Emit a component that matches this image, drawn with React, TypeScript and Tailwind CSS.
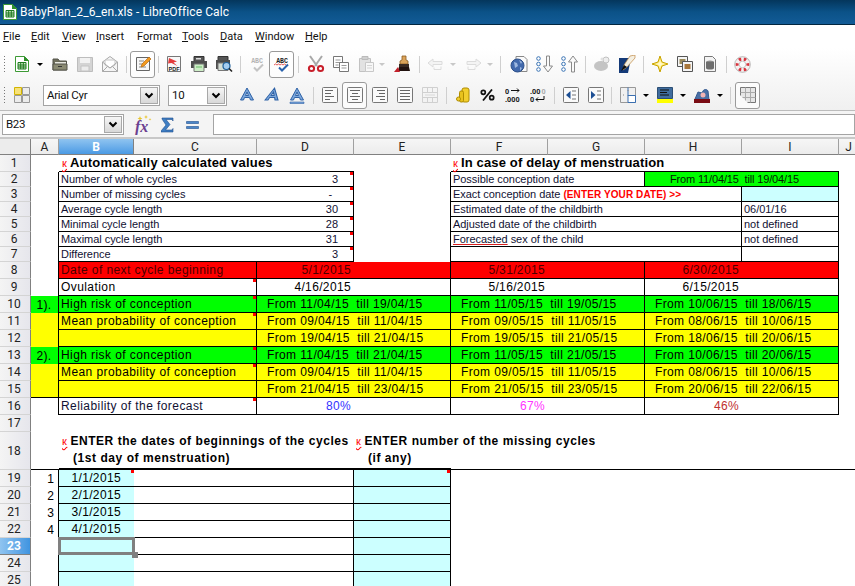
import type { ReactNode } from "react";

const ui = "font-['Roboto',sans-serif]";
const arial = "font-['Liberation_Sans',Arial,sans-serif]";

function Ico({ children, w = 18, h = 18 }: { children: ReactNode; w?: number; h?: number }) {
  return (
    <svg width={w} height={h} viewBox={`0 0 ${w} ${h}`} className="block shrink-0">
      {children}
    </svg>
  );
}

const GreenDoc = () => (
  <Ico w={16} h={18}>
    <path d="M1.500 1.500h9l4 4v11h-13z" fill="#fff" stroke="#3d9a35" />
    <path d="M10 1l5 5h-5z" fill="#2f8f2a" />
    <path d="M4 7.500h8v6.500h-8z" fill="#cfe9c5" stroke="#1f7a20" />
    <path d="M4 10h8M4 12h8M6.700 7.500v6.500M9.300 7.500v6.500" stroke="#1f7a20" />
  </Ico>
);
const Open = () => (
  <Ico>
    <path d="M2 4h5l1.500 2h7v9h-13.500z" fill="#6f6f5c" stroke="#55554a" />
    <path d="M4 7h11v2h-11z" fill="#e8e8e0" />
    <path d="M2 9h14v6h-14z" fill="#8a8a72" stroke="#55554a" />
    <path d="M7 11h4v1h-4z" fill="#333" />
  </Ico>
);
const Save = () => (
  <Ico>
    <path d="M1.500 2.500h15v14h-15z" fill="#d4d4d4" stroke="#bdbdbd" />
    <path d="M4 3h10v5h-10z" fill="#f2f2f2" />
    <path d="M5 11h8v5h-8z" fill="#ececec" stroke="#c4c4c4" />
  </Ico>
);
const Mail = () => (
  <Ico>
    <path d="M1.500 7l7.500-5.500 7.500 5.500v9.500h-15z" fill="#f5f5f5" stroke="#a9a9a9" />
    <path d="M4 5h10v5l-5 3-5-3z" fill="#fff" stroke="#c4c4c4" />
    <path d="M1.500 7l7.500 6 7.500-6M1.500 16.500l5-5M16.500 16.500l-5-5" fill="none" stroke="#a9a9a9" />
  </Ico>
);
const EditDoc = () => (
  <Ico>
    <path d="M2.500 2.500h13v13h-13z" fill="#f6f6f6" stroke="#666" />
    <path d="M5 6h5M5 9h4M5 12h7" stroke="#888" />
    <path d="M7 12l1-3 7-7 2 2-7 7z" fill="#f29a1f" stroke="#b86a10" strokeWidth="0.7" />
  </Ico>
);
const Pdf = () => (
  <Ico w={16} h={18}>
    <path d="M1.500 1.500h13v15h-13z" fill="#f8f8f8" stroke="#777" />
    <path d="M3 3l8 3.500-3.500 1 4 3.500-6-3-3.500 .5z" fill="#e33b3b" />
    <text x="8" y="16" textAnchor="middle" fontSize="5.500" fontWeight="700" fontFamily="Liberation Sans" fill="#222">PDF</text>
  </Ico>
);
const Printer = () => (
  <Ico>
    <path d="M4 1.500h10v5h-10z" fill="#555" stroke="#333" />
    <path d="M6 3h5v1.500h-5z" fill="#ddd" />
    <path d="M1 6h16v7h-16z" fill="#4d4d4d" />
    <path d="M4 9h10v7.500h-10z" fill="#cdeec6" stroke="#777" />
    <path d="M6 12h6" stroke="#6b6" />
  </Ico>
);
const Preview = () => (
  <Ico>
    <path d="M3 1.500h10v5h-10z" fill="#555" stroke="#333" />
    <path d="M1 5h14v9h-14z" fill="#4d4d4d" />
    <path d="M3 8h10v7.500h-10z" fill="#d6ded6" stroke="#777" />
    <circle cx="11.500" cy="11" r="3.500" fill="#a5cdf0" stroke="#1d5f9a" strokeWidth="1.200" />
    <path d="M14 13.500l3 3" stroke="#222" strokeWidth="1.600" />
  </Ico>
);
const Abc = ({ on }: { on: boolean }) => (
  <Ico>
    <text x="9" y="7.500" textAnchor="middle" fontSize="6.500" fontWeight="700" fontFamily="Liberation Mono" fill={on ? "#222" : "#b4b4b4"}>ABC</text>
    {on && <path d="M1 10l1.500-1 1.500 1 1.500-1 1.500 1 1.500-1 1.500 1 1.500-1 1.500 1" fill="none" stroke="#d83030" strokeWidth="0.800" />}
    <path d="M6 12.500l3 3 6-6" fill="none" stroke={on ? "#2a63ad" : "#c4c4c4"} strokeWidth="2" />
  </Ico>
);
const Scissors = () => (
  <Ico>
    <path d="M3 1l7 10M15 1l-7 10" stroke="#a8a8a8" strokeWidth="2" />
    <circle cx="4.500" cy="13.500" r="2.600" fill="none" stroke="#c81e2a" strokeWidth="2" />
    <circle cx="13.500" cy="13.500" r="2.600" fill="none" stroke="#c81e2a" strokeWidth="2" />
  </Ico>
);
const Copy = () => (
  <Ico>
    <path d="M1.500 1.500h9v11h-9z" fill="#fff" stroke="#777" />
    <path d="M3.500 5h5M3.500 7.500h5M3.500 10h3" stroke="#999" />
    <path d="M7.500 7.500h9v9h-9z" fill="#fff" stroke="#777" />
    <path d="M9.500 10.500h5M9.500 13h5" stroke="#999" />
  </Ico>
);
const Paste = () => (
  <Ico>
    <path d="M2.500 3.500h11v13h-11z" fill="#e2e2e2" stroke="#c2c2c2" />
    <path d="M5 1.500h6v3h-6z" fill="#d0d0d0" stroke="#bbb" />
    <path d="M8.500 7.500h8v9h-8z" fill="#f7f7f7" stroke="#c8c8c8" />
    <path d="M10 10.500h5M10 13h5" stroke="#d4d4d4" />
  </Ico>
);
const Brush = () => (
  <Ico>
    <path d="M8 1h4v4l2 1v3h-8v-3l2-1z" fill="#dba35a" stroke="#8a5a1f" strokeWidth="0.800" />
    <path d="M5 9h10v3h-10z" fill="#3a2a22" />
    <path d="M5 12h10l1 4h-12z" fill="#22120f" />
    <path d="M0 17l4-5 2 5z" fill="#c2202a" />
  </Ico>
);
const Undo = ({ flip }: { flip?: boolean }) => (
  <Ico>
    <g transform={flip ? "translate(18 0) scale(-1 1)" : undefined} fill="#f4f4f4" stroke="#dcdcdc">
      <path d="M1 8l5-4v2.500h9v3h-9v2.500z" />
      <path d="M14 11.500v3h-7v-2" fill="none" />
    </g>
  </Ico>
);
const Link = () => (
  <Ico>
    <path d="M6 1.500h8l3 3v12h-11z" fill="#fafafa" stroke="#888" />
    <circle cx="7.500" cy="10.500" r="6.500" fill="#4169ad" stroke="#2b4f8a" />
    <path d="M4 7l3 1 1 3-3 2zM9 5l3 2-1 2zM10 12l2 1-2 3z" fill="#9db8e0" />
  </Ico>
);
const Sort = ({ up }: { up?: boolean }) => (
  <Ico>
    <circle cx="3.500" cy="3.500" r="1.800" fill="#fff" stroke="#3a74b5" />
    <circle cx="3.500" cy="9" r="1.800" fill="#fff" stroke="#3a74b5" />
    <circle cx="3.500" cy="14.500" r="1.800" fill="#fff" stroke="#3a74b5" />
    <path
      d={up ? "M13 1l4.500 6h-3v10h-3v-10h-3z" : "M13 17l4.500-6h-3v-10h-3v10h-3z"}
      fill="#fafafa"
      stroke="#8a8a8a"
    />
  </Ico>
);
const Blob = () => (
  <Ico>
    <ellipse cx="8" cy="11" rx="7" ry="5" fill="#c4c4c4" />
    <circle cx="13" cy="5" r="3" fill="#ededed" stroke="#c0c0c0" />
    <circle cx="9" cy="4" r="1.500" fill="#e0e0e0" />
  </Ico>
);
const Pen = () => (
  <Ico>
    <path d="M1 3h12l-3 15h-9z" fill="#143a78" />
    <path d="M12 1l5-1v3l-8 9-4 3 1-5z" fill="#f4efe2" stroke="#c08a45" strokeWidth="0.700" />
    <path d="M3 16l3-6 3 2z" fill="#111" />
  </Ico>
);
const Star = () => (
  <Ico>
    <path d="M9 1l2 6 6 2-6 2-2 6-2-6-6-2 6-2z" fill="#ffea7a" stroke="#c9a400" />
    <path d="M9 5l1 3 3 1-3 1-1 3-1-3-3-1 3-1z" fill="#fff9d0" />
  </Ico>
);
const Frames = () => (
  <Ico>
    <path d="M1.500 1.500h10v10h-10z" fill="#f5f5f5" stroke="#555" />
    <path d="M3.500 4h6v5h-6z" fill="#9a8a5a" />
    <path d="M6.500 6.500h10v10h-10z" fill="#f5f5f5" stroke="#555" />
    <path d="M8.500 9h6v5h-6z" fill="#a8763a" />
  </Ico>
);
const DocCan = () => (
  <Ico w={14} h={18}>
    <path d="M1.500 1.500h8l3 3v12h-11z" fill="#f3f3f3" stroke="#777" />
    <ellipse cx="7" cy="7" rx="4" ry="1.600" fill="#8c8c8c" />
    <path d="M3 7h8v6c0 2-8 2-8 0z" fill="#6e6e6e" />
  </Ico>
);
const Help = () => (
  <Ico w={17} h={17}>
    <circle cx="8.500" cy="8.500" r="6.500" fill="none" stroke="#f4f0f0" strokeWidth="4" />
    <path d="M4 2.800a7.500 7.500 0 0 1 3-1l.5 3a4 4 0 0 0-1.500.7zM10 1.800a7.500 7.500 0 0 1 3 1l-2 2.700a4 4 0 0 0-1.500-.7zM15.200 7l-3 .5a4 4 0 0 1 0 2l3 .5a7.500 7.500 0 0 0 0-3zM13 14.200l-2-2.700a4 4 0 0 1-1.500.7l.5 3a7.500 7.500 0 0 0 3-1zM7 15.200l.5-3a4 4 0 0 1-1.500-.7l-2 2.700a7.500 7.500 0 0 0 3 1zM1.800 10l3-.5a4 4 0 0 1 0-2l-3-.5a7.500 7.500 0 0 0 0 3z" fill="#d8343e" />
    <circle cx="8.500" cy="8.500" r="7.800" fill="none" stroke="#999" strokeWidth="0.600" />
    <circle cx="8.500" cy="8.500" r="3.300" fill="none" stroke="#aaa" strokeWidth="0.600" />
  </Ico>
);
const Styles = () => (
  <Ico w={16} h={16}>
    <path d="M.5.500h7v7h-7z" fill="#f7e27a" stroke="#d2b400" />
    <path d="M8.500.500h7v7h-7zM.5 8.500h7v7h-7zM8.500 8.500h7v7h-7z" fill="#ececec" stroke="#999" />
  </Ico>
);
const BigA = ({ kind }: { kind: "b" | "i" | "u" }) => (
  <Ico>
    <g transform={kind === "i" ? "skewX(-14) translate(3 0)" : undefined}>
      <path
        d="M9 2l6.500 12h-3l-1-2.500h-5l-1 2.500h-3zM9 6l-1.500 3.500h3z"
        fill="#7aa6dc"
        stroke="#2f62a6"
        fillRule="evenodd"
      />
    </g>
    {kind === "u" && <path d="M2 16h14v1.500h-14z" fill="#7aa6dc" stroke="#2f62a6" strokeWidth="0.600" />}
  </Ico>
);
const Align = ({ lines }: { lines: [number, number][] }) => (
  <Ico w={16} h={16}>
    <rect x=".5" y=".5" width="15" height="15" rx="1" fill="#fafafa" stroke="#777" />
    {lines.map(([a, b], i) => (
      <path key={i} d={`M${a} ${3.5 + i * 3}H${b}`} stroke="#666" />
    ))}
  </Ico>
);
const Merge = () => (
  <Ico w={16} h={16}>
    <path d="M.5.500h15v15h-15zM.5 5.500h15M.5 10.500h15M5.500.500v5M10.500.500v5M5.500 10.500v5M10.500 10.500v5" fill="none" stroke="#d0d0d0" />
    <path d="M3 8h10" stroke="#d8d8d8" />
  </Ico>
);
const Coins = () => (
  <Ico w={14} h={16}>
    <rect x="6" y="1" width="7" height="14" rx="2" fill="#f2cf2e" stroke="#b08d00" />
    <rect x="3.500" y="4" width="4" height="11" rx="1.500" fill="#e8c21d" stroke="#b08d00" />
    <circle cx="2.500" cy="12" r="2" fill="#f2cf2e" stroke="#b08d00" />
  </Ico>
);
const Percent = () => (
  <Ico w={15} h={12}>
    <circle cx="3.300" cy="3.300" r="2" fill="none" stroke="#111" strokeWidth="1.700" />
    <circle cx="11.700" cy="8.700" r="2" fill="none" stroke="#111" strokeWidth="1.700" />
    <path d="M12 .5l-9 11" stroke="#111" strokeWidth="1.800" />
  </Ico>
);
const Decimals = ({ add }: { add?: boolean }) => (
  <Ico w={16} h={16}>
    <g fontFamily="Liberation Sans" fontWeight="700" fontSize="7.500" fill="#111">
      <text x="0" y="7">{add ? "0" : ".00"}</text>
      <text x="0" y="15">{add ? ".000" : "0"}</text>
    </g>
    {add ? (
      <path d="M6 3.500h8M12 1.500l2 2-2 2" fill="none" stroke="#111" />
    ) : (
      <path d="M14 9v3.500h-8M8 10.500l-2 2 2 2" fill="none" stroke="#111" />
    )}
    {!add && <text x="11.500" y="7" fontFamily="Liberation Sans" fontWeight="700" fontSize="7.500" fill="#aaa">0</text>}
  </Ico>
);
const Indent = ({ inc }: { inc?: boolean }) => (
  <Ico w={16} h={16}>
    <rect x=".5" y=".5" width="15" height="15" rx="1" fill="#fafafa" stroke="#777" />
    <path d={inc ? "M3 4v8l4.500-4z" : "M7.500 4v8l-4.500-4z"} fill="#1d4f94" />
    <path d="M9 4h4M9 8h4M9 12h4" stroke="#777" />
  </Ico>
);
const Borders = () => (
  <Ico w={16} h={16}>
    <path d="M.5.500h15v15h-15z" fill="#f0f0f0" stroke="#999" />
    <path d="M8 .5v8H15.500v7H8V8" fill="#fff" stroke="#3b6fb0" />
    <path d="M3 8h2M8 3v2" stroke="#888" strokeDasharray="1 1" />
  </Ico>
);
const BgColor = () => (
  <Ico w={16} h={16}>
    <path d="M.5.500h15v11h-15z" fill="#3f6c9e" stroke="#2c4f75" />
    <path d="M3 3h9M3 5.500h7M3 8h9" stroke="#111" />
    <path d="M0 12h16v4h-16z" fill="#ffff00" />
  </Ico>
);
const FontColor = () => (
  <Ico w={16} h={16}>
    <path d="M1 12l3-7 4 1 1-2c1-2 4-2 5 0l1 9z" fill="#4a6fa5" stroke="#345a90" />
    <circle cx="9" cy="8" r="2.500" fill="#f3b4b4" />
    <path d="M0 12h16v4h-16z" fill="#7a0c14" />
  </Ico>
);
const GridTool = () => (
  <Ico w={16} h={16}>
    <path d="M.5.500h15v15h-15z" fill="#e6e6e6" stroke="#777" />
    <path d="M5.500.500v15M10.500.500v15M.5 5.500h15M.5 10.500h15" stroke="#aaa" />
    <path d="M0 16V8l8 8z" fill="#fafafa" />
  </Ico>
);
const FxIcon = () => (
  <svg width="18" height="20" viewBox="0 0 18 20" className="block">
    <path d="M6 1l.7 1.800 1.800.7-1.800.7-.7 1.800-.7-1.800-1.800-.7 1.800-.7zM12 0l.6 1.400 1.400.6-1.400.6-.6 1.400-.6-1.400-1.400-.6 1.400-.6zM16 3l.4 1 1 .4-1 .4-.4 1-.4-1-1-.4 1-.4z" fill="#e8c52e" />
    <text x="1" y="17" fontFamily="Liberation Serif" fontStyle="italic" fontWeight="700" fontSize="16" fill="#6b3f8f">fx</text>
  </svg>
);

const Btn = ({ children, boxed }: { children: ReactNode; boxed?: boolean }) => (
  <div
    className={`w-[25px] h-[27px] shrink-0 flex items-center justify-center rounded-[3px] ${
      boxed ? "border border-[#9a9a9a] bg-white/70" : ""
    }`}
  >
    {children}
  </div>
);
const Arrow = ({ className, off }: { className: string; off?: boolean }) => (
  <div className={`${className} shrink-0 flex items-center justify-center`}>
    <div
      className={`w-0 h-0 border-x-[3px] border-x-transparent border-t-[3px] ${
        off ? "border-t-[#c8c8c8]" : "border-t-black"
      }`}
    />
  </div>
);
const Sep = ({ className }: { className: string }) => (
  <div className={`${className} shrink-0 flex justify-center`}>
    <div className="w-px h-[17px] bg-[#cfcfcf]" />
  </div>
);
const Grip = () => (
  <div className="w-[9px] shrink-0 flex flex-col items-center gap-[2px]">
    {[0, 1, 2, 3, 4, 5].map((i) => (
      <div key={i} className="w-px h-px bg-[#777]" />
    ))}
  </div>
);
const Chevron = () => (
  <svg width="10" height="7" viewBox="0 0 10 7" className="block">
    <path d="M1.500 1.500L5 5l3.500-3.500" fill="none" stroke="#000" strokeWidth="2" />
  </svg>
);
const Combo = ({ value, className }: { value: string; className: string }) => (
  <div className={`${className} h-[21px] shrink-0 flex items-stretch justify-between border border-[#a4a4a4] bg-white`}>
    <span className={`${ui} pl-[3px] text-[11.5px] leading-[19px] text-[#111] tracking-[-0.3px]`}>{value}</span>
    <div className="w-[18px] m-px flex items-center justify-center border border-[#a8a8a8] bg-gradient-to-b from-[#f6f6f6] to-[#d8d8d8]">
      <Chevron />
    </div>
  </div>
);

const menus = [
  { pre: "", u: "F", post: "ile", w: "w-[28px]" },
  { pre: "", u: "E", post: "dit", w: "w-[31px]" },
  { pre: "", u: "V", post: "iew", w: "w-[34px]" },
  { pre: "", u: "I", post: "nsert", w: "w-[41px]" },
  { pre: "F", u: "o", post: "rmat", w: "w-[45px]" },
  { pre: "", u: "T", post: "ools", w: "w-[38px]" },
  { pre: "", u: "D", post: "ata", w: "w-[35px]" },
  { pre: "", u: "W", post: "indow", w: "w-[50px]" },
  { pre: "", u: "H", post: "elp", w: "w-[40px]" },
];

// красные метки примечаний в углу ячейки
const Mark = () => <span className="absolute top-0 right-0 w-[3px] h-[3px] bg-[#ff0000]" />;
const K = () => <span className="text-[#ff0000] font-normal underline decoration-wavy decoration-[#ff0000] text-[11px]">к</span>;

const Head = ({ n, on }: { n: number; on?: boolean }) => (
  <div
    className={`${ui} flex items-center justify-center pr-[2px] border-r border-b text-[12px] leading-none ${
      on
        ? "border-[#808080] bg-gradient-to-r from-[#8fc4f0] to-[#3f94e0] text-white font-bold"
        : "border-r-[#808080] border-b-[#d4d4d4] bg-gradient-to-r from-[#f4f4f4] to-[#e6e6ec] text-[#222]"
    }`}
  >
    {n}
  </div>
);
const ColHead = ({ t, on }: { t: string; on?: boolean }) => (
  <div
    className={`${ui} flex items-center justify-center border-r border-b border-b-[#808080] text-[12px] leading-none ${
      on
        ? "border-r-[#808080] bg-gradient-to-b from-[#8fc4f0] to-[#4a9ae4] text-white font-bold"
        : "border-r-[#a0a0a0] bg-gradient-to-b from-[#f6f6f6] to-[#ececec] text-[#222]"
    }`}
  >
    {t}
  </div>
);
const Cell = ({ className = "", children }: { className?: string; children?: ReactNode }) => (
  <div className={`${arial} relative flex items-center whitespace-nowrap ${className}`}>{children}</div>
);

const box = "border-r border-b border-black";
const small = "text-[11px] pl-[2px] text-[#111133] tracking-[-0.04px]";
const big = "text-[12px] pl-[2px] tracking-[0.42px]";
const date = "text-[12px] justify-end pr-[99px] tracking-[0.36px]";
const range = "text-[12px] pl-[10px] tracking-[0.37px]";

const calc = [
  { label: "Number of whole cycles", value: "3", pad: "pr-[15px]" },
  { label: "Number of missing cycles", value: "-", pad: "pr-[21px]" },
  { label: "Average cycle length", value: "30", pad: "pr-[15px]" },
  { label: "Minimal cycle length", value: "28", pad: "pr-[15px]" },
  { label: "Maximal cycle length", value: "31", pad: "pr-[15px]" },
  { label: "Difference", value: "3", pad: "pr-[15px]" },
];

const bands = [
  { n: 10, a: "1).", lab: "High risk of conception", bg: "bg-[#00ff00]", d: ["From 11/04/15  till 19/04/15", "From 11/05/15  till 19/05/15", "From 10/06/15  till 18/06/15"] },
  { n: 11, a: "", lab: "Mean probability of conception", bg: "bg-[#ffff00]", d: ["From 09/04/15  till 11/04/15", "From 09/05/15  till 11/05/15", "From 08/06/15  till 10/06/15"] },
  { n: 12, a: "", lab: "", bg: "bg-[#ffff00]", d: ["From 19/04/15  till 21/04/15", "From 19/05/15  till 21/05/15", "From 18/06/15  till 20/06/15"] },
  { n: 13, a: "2).", lab: "High risk of conception", bg: "bg-[#00ff00]", d: ["From 11/04/15  till 21/04/15", "From 11/05/15  till 21/05/15", "From 10/06/15  till 20/06/15"] },
  { n: 14, a: "", lab: "Mean probability of conception", bg: "bg-[#ffff00]", d: ["From 09/04/15  till 11/04/15", "From 09/05/15  till 11/05/15", "From 08/06/15  till 10/06/15"] },
  { n: 15, a: "", lab: "", bg: "bg-[#ffff00]", d: ["From 21/04/15  till 23/04/15", "From 21/05/15  till 23/05/15", "From 20/06/15  till 22/06/15"] },
];

const cycles = [
  { n: 19, a: "1", d: "1/1/2015" },
  { n: 20, a: "2", d: "2/1/2015" },
  { n: 21, a: "3", d: "3/1/2015" },
  { n: 22, a: "4", d: "4/1/2015" },
  { n: 23, a: "", d: "" },
  { n: 24, a: "", d: "" },
  { n: 25, a: "", d: "" },
];

export default function App() {
  return (
    <div className="w-[855px] h-[586px] overflow-hidden flex flex-col bg-white text-black">
      {/* title */}
      <div className="h-[25px] shrink-0 flex items-center gap-[2px] pl-[2px] border-b border-[#02263f] bg-gradient-to-b from-[#04365c] via-[#0b5288] to-[#125b96]">
        <div className="w-[16px] flex justify-center">
          <GreenDoc />
        </div>
        <span className={`${ui} text-[12px] text-white tracking-[0.1px]`}>BabyPlan_2_6_en.xls - LibreOffice Calc</span>
      </div>

      {/* menu */}
      <div className={`${ui} h-[23px] shrink-0 flex items-center pt-px pl-[3px] text-[11px] text-[#111]`}>
        {menus.map((m) => (
          <div key={m.post} className={m.w}>
            {m.pre}
            <span className="underline">{m.u}</span>
            {m.post}
          </div>
        ))}
      </div>

      {/* toolbars */}
      <div className="h-[63px] shrink-0 flex flex-col border-b border-[#bcbcbc] bg-gradient-to-b from-white to-[#f0f0f0]">
        <div className="h-[32px] flex items-center">
          <Grip />
          <Btn><GreenDoc /></Btn>
          <Arrow className="w-[12px]" />
          <div className="w-px shrink-0" />
          <Btn><Open /></Btn>
          <Btn><Save /></Btn>
          <Btn><Mail /></Btn>
          <Sep className="w-[8px]" />
          <Btn boxed><EditDoc /></Btn>
          <Sep className="w-[6px]" />
          <Btn><Pdf /></Btn>
          <Btn><Printer /></Btn>
          <Btn><Preview /></Btn>
          <Sep className="w-[8px]" />
          <Btn><Abc on={false} /></Btn>
          <Btn boxed><Abc on /></Btn>
          <Sep className="w-[9px]" />
          <Btn><Scissors /></Btn>
          <Btn><Copy /></Btn>
          <Btn><Paste /></Btn>
          <Arrow className="w-[8px]" off />
          <div className="w-[4px] shrink-0" />
          <Btn><Brush /></Btn>
          <Sep className="w-[8px]" />
          <Btn><Undo /></Btn>
          <Arrow className="w-[10px]" off />
          <div className="w-[2px] shrink-0" />
          <Btn><Undo flip /></Btn>
          <Arrow className="w-[10px]" off />
          <Sep className="w-[11px]" />
          <Btn><Link /></Btn>
          <Btn><Sort /></Btn>
          <Btn><Sort up /></Btn>
          <Sep className="w-[8px]" />
          <Btn><Blob /></Btn>
          <Btn><Pen /></Btn>
          <Sep className="w-[8px]" />
          <Btn><Star /></Btn>
          <Btn><Frames /></Btn>
          <Btn><DocCan /></Btn>
          <Sep className="w-[8px]" />
          <Btn><Help /></Btn>
        </div>
        <div className="h-[30px] flex items-center">
          <Grip />
          <Btn><Styles /></Btn>
          <div className="w-[9px] shrink-0" />
          <Combo value="Arial Cyr" className="w-[117px]" />
          <div className="w-[8px] shrink-0" />
          <Combo value="10" className="w-[59px]" />
          <div className="w-[7px] shrink-0" />
          <Btn><BigA kind="b" /></Btn>
          <Btn><BigA kind="i" /></Btn>
          <Btn><BigA kind="u" /></Btn>
          <Sep className="w-[8px]" />
          <Btn><Align lines={[[3, 11], [3, 9], [3, 12], [3, 8]]} /></Btn>
          <Btn boxed><Align lines={[[3, 13], [5, 11], [3, 13], [5, 11]]} /></Btn>
          <Btn><Align lines={[[5, 13], [7, 13], [4, 13], [8, 13]]} /></Btn>
          <Btn><Align lines={[[3, 13], [3, 13], [3, 13], [3, 13]]} /></Btn>
          <Btn><Merge /></Btn>
          <Sep className="w-[8px]" />
          <Btn><Coins /></Btn>
          <Btn><Percent /></Btn>
          <Btn><Decimals add /></Btn>
          <Btn><Decimals /></Btn>
          <Sep className="w-[8px]" />
          <Btn><Indent /></Btn>
          <Btn><Indent inc /></Btn>
          <Sep className="w-[7px]" />
          <Btn><Borders /></Btn>
          <Arrow className="w-[12px]" />
          <Btn><BgColor /></Btn>
          <Arrow className="w-[12px]" />
          <Btn><FontColor /></Btn>
          <Arrow className="w-[12px]" />
          <Sep className="w-[9px]" />
          <Btn boxed><GridTool /></Btn>
        </div>
      </div>

      {/* formula bar */}
      <div className="h-[28px] shrink-0 flex items-start pt-[3px] border-b-[2px] border-[#c8c8c8] bg-[#f4f4f4]">
        <div className="pl-[2px] shrink-0">
          <Combo value="B23" className="w-[122px]" />
        </div>
        <div className="w-[10px] shrink-0" />
        <div className="w-[18px] h-[21px] shrink-0 flex items-center justify-center">
          <FxIcon />
        </div>
        <div className="w-[5px] shrink-0" />
        <div className="w-[20px] h-[21px] shrink-0 flex items-center justify-center">
          <svg width="13" height="16" viewBox="0 0 13 16">
            <path d="M1 1h11v3l-1-1.500h-6l4 5-4.500 5.500h6.500l1-1.500v3.500h-12v-1l5-6-4-6z" fill="#3f7fc4" stroke="#1f4f8f" strokeWidth="0.600" />
          </svg>
        </div>
        <div className="w-[5px] shrink-0" />
        <div className="w-[20px] h-[21px] shrink-0 flex items-center justify-center">
          <svg width="13" height="10" viewBox="0 0 13 10">
            <path d="M.5 1.500h12v2h-12zM.5 6.500h12v2h-12z" fill="#4a86c8" stroke="#1f4f8f" strokeWidth="0.600" />
          </svg>
        </div>
        <div className="w-[11px] shrink-0" />
        <div className="flex-1 h-[21px] border border-[#a4a4a4] bg-white" />
      </div>

      {/* sheet */}
      <div className="grid grid-cols-[31px_28px_75px_123px_97px_97px_97px_97px_97px_97px_20px] grid-rows-[16px_17px_15px_15px_15px_15px_15px_15px_17px_17px_17px_17px_17px_17px_17px_17px_17px_17px_38px_17px_17px_17px_17px_17px_17px_17px]">
        <div className="border-r border-b border-r-[#808080] border-b-[#808080] bg-[#ececec]" />
        <ColHead t="A" />
        <ColHead t="B" on />
        {["C", "D", "E", "F", "G", "H", "I", "J"].map((c) => (
          <ColHead key={c} t={c} />
        ))}

        {/* 1 */}
        <Head n={1} />
        <Cell />
        <Cell className="col-span-3 border-b border-black text-[13px] font-bold pl-[3px] gap-[3px] tracking-[0.2px]">
          <K />Automatically calculated values
        </Cell>
        <Cell />
        <Cell className="col-span-4 border-b border-black text-[13px] font-bold pl-[2px] gap-[3px] tracking-[0.15px]">
          <K />In case of delay of menstruation
        </Cell>
        <Cell />

        {/* 2-7 */}
        {calc.map((r, i) => (
          <div key={r.label} className="contents">
            <Head n={i + 2} />
            <Cell className="border-r border-black" />
            <Cell className={`col-span-3 justify-between ${box} ${small} ${r.pad}`}>
              <span>{r.label}</span>
              <span>{r.value}</span>
              <Mark />
            </Cell>
            <Cell className="border-r border-black" />
            {i === 0 && (
              <>
                <Cell className={`col-span-2 ${box} ${small}`}>Possible conception date</Cell>
                <Cell className={`col-span-2 bg-[#00ff00] ${box} text-[11px] pl-[25px] tracking-[-0.15px] text-[#001a00]`}>
                  From 11/04/15&nbsp; till 19/04/15
                </Cell>
              </>
            )}
            {i === 1 && (
              <>
                <Cell className={`col-span-3 ${box} ${small}`}>
                  Exact conception date&nbsp;
                  <span className="font-bold text-[10px] tracking-[0.1px] text-[#ff0000]">(ENTER YOUR DATE) &gt;&gt;</span>
                </Cell>
                <Cell className={`bg-[#ccffff] ${box}`} />
              </>
            )}
            {i === 2 && (
              <>
                <Cell className={`col-span-3 ${box} ${small}`}>Estimated date of the childbirth</Cell>
                <Cell className={`${box} ${small}`}>06/01/16</Cell>
              </>
            )}
            {i === 3 && (
              <>
                <Cell className={`col-span-3 ${box} ${small}`}>Adjusted date of the childbirth</Cell>
                <Cell className={`${box} ${small}`}>not defined</Cell>
              </>
            )}
            {i === 4 && (
              <>
                <Cell className={`col-span-3 ${box} ${small}`}>
                  <span className="underline decoration-[#d82020] whitespace-pre">Forecasted</span>&nbsp;sex of the child
                </Cell>
                <Cell className={`${box} ${small}`}>not defined</Cell>
              </>
            )}
            {i === 5 && (
              <>
                <Cell className={`col-span-3 ${box}`} />
                <Cell className={box} />
              </>
            )}
            <Cell />
          </div>
        ))}

        {/* 8 */}
        <Head n={8} />
        <Cell className="border-r border-black" />
        <Cell className={`col-span-2 bg-[#ff0000] ${box} ${big} text-[#4a0000]`}>Date of next cycle beginning</Cell>
        <Cell className={`col-span-2 bg-[#ff0000] ${box} ${date} text-[#4a0000]`}>5/1/2015</Cell>
        <Cell className={`col-span-2 bg-[#ff0000] ${box} ${date} text-[#4a0000]`}>5/31/2015</Cell>
        <Cell className={`col-span-2 bg-[#ff0000] ${box} ${date} text-[#4a0000]`}>6/30/2015</Cell>
        <Cell />

        {/* 9 */}
        <Head n={9} />
        <Cell className="border-r border-black" />
        <Cell className={`col-span-2 ${box} ${big}`}>
          Ovulation
          <Mark />
        </Cell>
        <Cell className={`col-span-2 ${box} ${date}`}>4/16/2015</Cell>
        <Cell className={`col-span-2 ${box} ${date}`}>5/16/2015</Cell>
        <Cell className={`col-span-2 ${box} ${date}`}>6/15/2015</Cell>
        <Cell />

        {/* 10-15 */}
        {bands.map((r) => (
          <div key={r.n} className="contents">
            <Head n={r.n} />
            <Cell className={`${r.a ? "bg-[#00ff00]" : "bg-[#ffff00]"} border-r border-black text-[12px] justify-center pr-[1px] tracking-[0.4px] ${r.n === 15 ? "border-b" : ""}`}>
              {r.a}
            </Cell>
            <Cell className={`col-span-2 ${r.bg} ${box} ${big}`}>
              {r.lab}
              {r.lab && <Mark />}
            </Cell>
            {r.d.map((t) => (
              <Cell key={t} className={`col-span-2 whitespace-pre ${r.bg} ${box} ${range}`}>
                {t}
              </Cell>
            ))}
            <Cell />
          </div>
        ))}

        {/* 16 */}
        <Head n={16} />
        <Cell className="border-r border-black" />
        <Cell className={`col-span-2 ${box} ${big} text-[#111133]`}>
          Reliability of the forecast
          <Mark />
        </Cell>
        <Cell className={`col-span-2 ${box} ${date} text-[#3333ff]`}>80%</Cell>
        <Cell className={`col-span-2 ${box} ${date} text-[#ff33ff]`}>67%</Cell>
        <Cell className={`col-span-2 ${box} ${date} text-[#c03030]`}>46%</Cell>
        <Cell />

        {/* 17 */}
        <Head n={17} />
        <Cell className="col-span-10" />

        {/* 18 */}
        <Head n={18} />
        <Cell className="border-b border-black" />
        <Cell className="col-span-3 border-b-2 border-black text-[12px] font-bold pl-[3px] tracking-[0.55px] leading-[17px]">
          <div>
            <div className="flex gap-[3px]"><K />ENTER the dates of beginnings of the cycles</div>
            <div className="pl-[11px]">(1st day of menstruation)</div>
          </div>
        </Cell>
        <Cell className="border-b-2 border-black text-[12px] font-bold pl-[2px] tracking-[0.55px] leading-[17px]">
          <div>
            <div className="flex gap-[3px]"><K />ENTER number of the missing cycles</div>
            <div className="pl-[12px]">(if any)</div>
          </div>
        </Cell>
        <Cell className="col-span-5 border-b border-black" />

        {/* 19-25 */}
        {cycles.map((r) => (
          <div key={r.n} className="contents">
            <Head n={r.n} on={r.n === 23} />
            <Cell className="border-r border-black text-[12px] justify-end pr-[4px]">{r.a}</Cell>
            <Cell className="bg-[#ccffff] border-b border-black text-[12px] justify-end pr-[13px] tracking-[0.36px]">
              {r.d}
              {r.n === 19 && <Mark />}
              {r.n === 23 && (
                <span className="absolute z-10 -left-px -top-px w-[77px] h-[18px] border-[3px] border-[#808080]">
                  <span className="absolute -right-[6px] -bottom-[6px] w-[6px] h-[6px] bg-[#808080]" />
                </span>
              )}
            </Cell>
            <Cell className={`col-span-2 ${box}`} />
            <Cell className={`bg-[#ccffff] ${box}`}>{r.n === 19 && <Mark />}</Cell>
            <Cell className="col-span-5" />
          </div>
        ))}
      </div>
    </div>
  );
}
